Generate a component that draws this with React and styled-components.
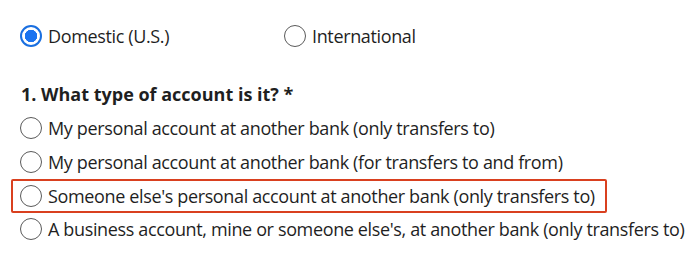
import React from 'react';
import styled, { createGlobalStyle } from 'styled-components';

const GlobalStyle = createGlobalStyle`
  body {
    margin: 0;
    background: #fff;
    font-family: "Open Sans", "Noto Sans", sans-serif;
    color: #1f1f1f;
  }
`;

const Page = styled.div`
  width: 700px;
  height: 267px;
  padding: 24px 0 0 20px;
  box-sizing: border-box;
  overflow: hidden;
`;

const TopRow = styled.div`
  display: flex;
  align-items: center;
  height: 24px;
`;

const Choice = styled.label`
  display: flex;
  align-items: center;
  gap: 6px;
  width: ${(p) => p.$width || 'auto'};
  font-size: 18px;
  letter-spacing: -0.36px;
  line-height: 24px;
  white-space: nowrap;
`;

const Radio = styled.span`
  flex: none;
  width: 22px;
  height: 22px;
  border-radius: 50%;
  box-sizing: border-box;
  border: ${(p) => (p.$checked ? '2px solid #1a6fe0' : '1.5px solid #5a5a5a')};
  background: ${(p) => (p.$checked ? 'radial-gradient(circle, #1a73f0 0 6px, #fff 6.5px)' : '#fff')};
`;

const Question = styled.h3`
  margin: 34px 0 10px 1px;
  font-size: 18px;
  font-weight: 700;
  line-height: 24px;
`;

const Options = styled.div`
  display: flex;
  flex-direction: column;
  gap: 10px;
`;

const OptionRow = styled.div`
  display: flex;
  width: fit-content;
  ${(p) =>
    p.$highlight &&
    `
    margin: -5.5px 0 -5.5px -9px;
    padding: 3px 10px 3px 7px;
    border: 2.5px solid #d9401f;
    border-radius: 2px;
  `}
`;

const options = [
  'My personal account at another bank (only transfers to)',
  'My personal account at another bank (for transfers to and from)',
  "Someone else's personal account at another bank (only transfers to)",
  "A business account, mine or someone else's, at another bank (only transfers to)",
];

export default function App() {
  return (
    <Page>
      <GlobalStyle />
      <TopRow>
        <Choice $width="264px">
          <Radio $checked />
          Domestic (U.S.)
        </Choice>
        <Choice>
          <Radio />
          International
        </Choice>
      </TopRow>
      <Question>1. What type of account is it? *</Question>
      <Options>
        {options.map((text, i) => (
          <OptionRow key={i} $highlight={i === 2}>
            <Choice>
              <Radio />
              {text}
            </Choice>
          </OptionRow>
        ))}
      </Options>
    </Page>
  );
}
